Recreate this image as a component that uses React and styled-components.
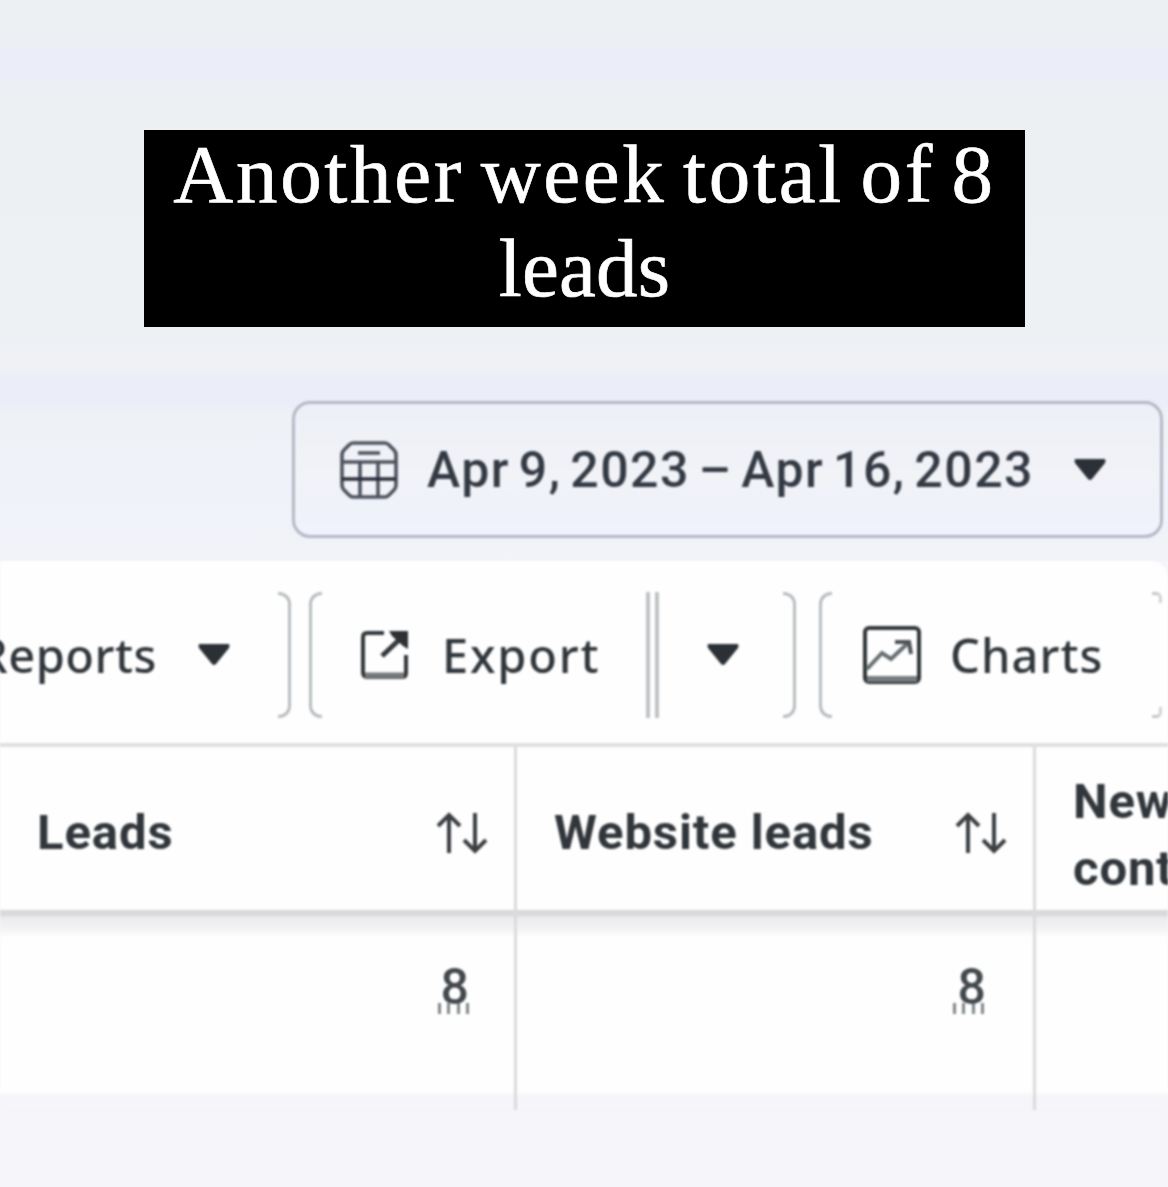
import React from "react";
import styled, { createGlobalStyle } from "styled-components";

const GlobalStyle = createGlobalStyle`
  * {
    box-sizing: border-box;
  }
  body {
    margin: 0;
    background: #f5f5fa;
    overflow: hidden;
  }
`;

const Page = styled.main`
  width: 1168px;
  height: 1187px;
  overflow: hidden;
  background: #f5f5fa;
  color: #30363b;
`;

const Hero = styled.section`
  display: flex;
  flex-direction: column;
  height: 561px;
  padding: 130px 5px 0 0;
  background: linear-gradient(
    #ecf0f2 0,
    #ecf0f3 46px,
    #ebedf9 50px,
    #ebedf9 78px,
    #ecf0f3 82px,
    #edf1f4 320px,
    #eff1f5 368px,
    #ebedf9 384px,
    #ebeef9 404px,
    #eef1f5 414px,
    #eff2f9 490px,
    #f1f3f8 561px
  );
`;

const Caption = styled.h1`
  width: 881px;
  height: 197px;
  margin: 0 0 0 144px;
  background: #000;
  color: #fff;
  font-family: "Liberation Serif", serif;
  font-weight: 400;
  font-size: 83px;
  line-height: 94px;
  text-align: center;
  -webkit-text-stroke: 0.7px #fff;
`;

const CaptionLine = styled.span`
  display: block;
  height: 94px;
  margin-top: ${(p) => p.$shift || 0}px;
  letter-spacing: ${(p) => p.$spacing}px;
  word-spacing: -7px;
  white-space: nowrap;
`;

const DatePicker = styled.button`
  display: flex;
  align-items: center;
  align-self: flex-end;
  width: 871px;
  height: 137px;
  margin-top: 74px;
  padding: 0 0 0 45px;
  border: 3px solid #b5b8c5;
  border-radius: 18px;
  background: linear-gradient(#eef0f8, #f1f3f7 55%, #f0f2fd);
  color: #343a44;
  filter: blur(0.8px);
`;

const DateText = styled.span`
  width: 604px;
  margin: 0 42px 0 29px;
  font-family: Roboto, sans-serif;
  font-weight: 500;
  font-size: 50px;
  letter-spacing: 1.5px;
  word-spacing: -5.1px;
  text-align: left;
  white-space: nowrap;
`;

const Panel = styled.section`
  height: 534px;
  border-top-right-radius: 16px;
  background: #fefefe;
  filter: blur(0.8px);
`;

const Toolbar = styled.div`
  display: flex;
  align-items: center;
  height: 186px;
  padding-top: 6px;
  border-bottom: 4px solid #e0e0e1;
`;

const Group = styled.div`
  display: flex;
  flex: none;
  align-items: center;
  justify-content: ${(p) => (p.$end ? "flex-end" : "flex-start")};
  width: ${(p) => p.$width}px;
  height: 126px;
  margin-right: ${(p) => p.$gap || 0}px;
`;

const Edge = styled.i`
  flex: none;
  width: 13px;
  height: 126px;
  border: 3px solid #b9bdc0;
  ${(p) =>
    p.$side === "left"
      ? "border-right: 0; border-radius: 12px 0 0 12px;"
      : "border-left: 0; border-radius: 0 12px 12px 0;"}
`;

const CutEdge = styled.i`
  display: flex;
  flex-direction: column;
  justify-content: space-between;
  height: 126px;
  margin-left: 51px;

  &::before,
  &::after {
    content: "";
    width: 7px;
    height: 8px;
    border-top: 3px solid #c4c7c9;
    border-right: 3px solid #d0d3d5;
    border-top-right-radius: 6px;
  }
  &::after {
    transform: scaleY(-1);
  }
`;

const Split = styled.i`
  width: 13px;
  height: 126px;
  margin-left: 48px;
  border: solid #bfc2c5;
  border-width: 0 4px;
`;

const Label = styled.span`
  flex: none;
  width: ${(p) => p.$width}px;
  margin-left: ${(p) => p.$left || 0}px;
  font-family: "Noto Sans", sans-serif;
  font-weight: 500;
  font-size: 47px;
  line-height: 60px;
  letter-spacing: ${(p) => p.$spacing || 0.5}px;
  white-space: nowrap;
`;

const Icon = styled.svg`
  display: block;
  flex: none;
  overflow: visible;
  margin-left: ${(p) => p.$left || 0}px;
  margin-right: ${(p) => p.$right || 0}px;
`;

const Row = styled.div`
  display: grid;
  grid-template-columns: 517px 519px 132px;
`;

const HeadCell = styled.div`
  display: flex;
  align-items: center;
  justify-content: space-between;
  height: 163px;
  padding: ${(p) => p.$top || 8}px 27px 0 37px;
  border-right: 3px solid #dadbdc;
  font-family: Roboto, sans-serif;
  font-weight: 700;
  font-size: 49px;
  line-height: 67px;
  letter-spacing: 0.9px;
  white-space: nowrap;
  overflow: hidden;

  &:last-child {
    border-right: 0;
  }
`;

const BodyCell = styled.div`
  display: flex;
  justify-content: flex-end;
  height: 200px;
  padding: 47px ${(p) => p.$right || 0}px 0 0;
  border-right: 3px solid #dadbdc;
  background: linear-gradient(
    #d8d8d9 0,
    #dadadb 5px,
    #ececee 8px,
    #f2f2f3 18px,
    #fefefe 27px,
    #fefefe 181px,
    #f5f5fa 187px
  );

  &:last-child {
    border-right: 0;
  }
`;

const Value = styled.span`
  height: 60px;
  color: #42484c;
  font-family: Roboto, sans-serif;
  font-weight: 500;
  font-size: 50px;
  line-height: 60px;
`;

const Ticks = styled.i`
  display: block;
  width: 31px;
  height: 11px;
  margin: -14px 0 0 ${(p) => p.$shift}px;
  background: repeating-linear-gradient(
    90deg,
    #80868a 0 3px,
    transparent 3px 9.3px
  );
`;

const Caret = ({ left, right }) => (
  <Icon width="34" height="24" viewBox="0 0 34 24" $left={left} $right={right}>
    <path d="M2 1H32Q33 3 32 5L19 21Q17 23 15 21L2 5Q1 3 2 1Z" fill="#2b3036" />
  </Icon>
);

const CalendarIcon = () => (
  <Icon width="58" height="58" viewBox="0 0 58 58">
    <g fill="none" stroke="#4d535e" strokeWidth="3.6">
      <path d="M13 2H45Q47 2 49 4L54 9Q56 11 56 14V44Q56 47 54 49L49 54Q47 56 45 56H13Q11 56 9 54L4 49Q2 47 2 44V14Q2 11 4 9L9 4Q11 2 13 2Z" />
      <path d="M18 12H40M2 21H56M20 21V56M38 21V56" />
      <path d="M2 38H56" stroke="#272c38" />
    </g>
  </Icon>
);

const ExportIcon = () => (
  <Icon width="48" height="50" viewBox="0 0 48 50" $left={39}>
    <g fill="none" stroke="#34383b" strokeWidth="4">
      <path d="M23 3H6Q2 3 2 7V42Q2 47 6 47H41Q45 47 45 43V25" />
      <path d="M21 26L38 10" strokeWidth="5" />
      <path d="M4 45.500H43" stroke="#74787a" strokeWidth="6" />
    </g>
    <path d="M28 1H47V19L42 16L31 6Z" fill="#2d3134" />
  </Icon>
);

const ChartIcon = () => (
  <Icon width="58" height="58" viewBox="0 0 58 58" $left={31}>
    <g fill="none" stroke="#303639" strokeWidth="4">
      <rect x="2" y="2" width="54" height="54" rx="4" />
      <path d="M4 53H54" stroke="#777c7e" strokeWidth="6" />
      <path d="M4 43L19 27L28 33L44 18" stroke="#676d70" />
      <path d="M32 16H46L48 28" stroke="#4b5154" />
    </g>
  </Icon>
);

const SortIcon = () => (
  <Icon width="50" height="42" viewBox="0 0 50 42">
    <path
      d="M12 41V3M1 14L12 3L23 14M38 1V39M27 28L38 39L49 28"
      fill="none"
      stroke="#3b3f42"
      strokeWidth="4"
    />
  </Icon>
);

const App = () => (
  <Page>
    <GlobalStyle />
    <Hero>
      <Caption>
        <CaptionLine $spacing={2.7} $shift={-3}>
          Another week total of 8
        </CaptionLine>
        <CaptionLine $spacing={0.2}>leads</CaptionLine>
      </Caption>
      <DatePicker>
        <CalendarIcon />
        <DateText>Apr 9, 2023 – Apr 16, 2023</DateText>
        <Caret />
      </DatePicker>
    </Hero>
    <Panel>
      <Toolbar>
        <Group $width={291} $gap={18} $end>
          <Label $width={178}>Reports</Label>
          <Caret left={41} right={47} />
          <Edge $side="right" />
        </Group>
        <Group $width={488} $gap={22}>
          <Edge $side="left" />
          <ExportIcon />
          <Label $width={156} $left={33} $spacing={1.8}>
            Export
          </Label>
          <Split />
          <Caret left={47} right={43} />
          <Edge $side="right" />
        </Group>
        <Group $width={349}>
          <Edge $side="left" />
          <ChartIcon />
          <Label $width={151} $left={29} $spacing={1.1}>
            Charts
          </Label>
          <CutEdge />
        </Group>
      </Toolbar>
      <Row>
        <HeadCell>
          Leads
          <SortIcon />
        </HeadCell>
        <HeadCell>
          Website leads
          <SortIcon />
        </HeadCell>
        <HeadCell $top={12}>
          New
          <br />
          cont
        </HeadCell>
      </Row>
      <Row>
        <BodyCell $right={45}>
          <Value>
            8<Ticks $shift={-3} />
          </Value>
        </BodyCell>
        <BodyCell $right={47}>
          <Value>
            8<Ticks $shift={-5} />
          </Value>
        </BodyCell>
        <BodyCell />
      </Row>
    </Panel>
  </Page>
);

export default App;
